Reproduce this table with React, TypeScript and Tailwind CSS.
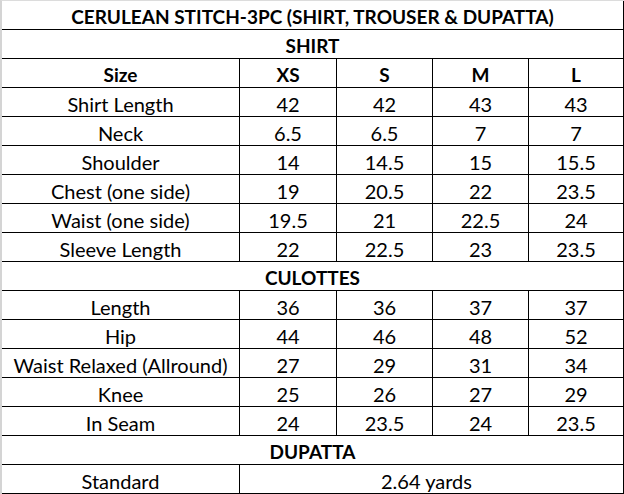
import React from "react";

const cols = "grid-cols-[238px_97px_96px_96px_95px]";

type Row =
  | { kind: "section"; label: string }
  | { kind: "data"; cells: string[]; bold?: boolean }
  | { kind: "span"; label: string; value: string };

const rows: Row[] = [
  { kind: "section", label: "CERULEAN STITCH-3PC (SHIRT, TROUSER & DUPATTA)" },
  { kind: "section", label: "SHIRT" },
  { kind: "data", cells: ["Size", "XS", "S", "M", "L"], bold: true },
  { kind: "data", cells: ["Shirt Length", "42", "42", "43", "43"] },
  { kind: "data", cells: ["Neck", "6.5", "6.5", "7", "7"] },
  { kind: "data", cells: ["Shoulder", "14", "14.5", "15", "15.5"] },
  { kind: "data", cells: ["Chest (one side)", "19", "20.5", "22", "23.5"] },
  { kind: "data", cells: ["Waist (one side)", "19.5", "21", "22.5", "24"] },
  { kind: "data", cells: ["Sleeve Length", "22", "22.5", "23", "23.5"] },
  { kind: "section", label: "CULOTTES" },
  { kind: "data", cells: ["Length", "36", "36", "37", "37"] },
  { kind: "data", cells: ["Hip", "44", "46", "48", "52"] },
  { kind: "data", cells: ["Waist Relaxed (Allround)", "27", "29", "31", "34"] },
  { kind: "data", cells: ["Knee", "25", "26", "27", "29"] },
  { kind: "data", cells: ["In Seam", "24", "23.5", "24", "23.5"] },
  { kind: "section", label: "DUPATTA" },
  { kind: "span", label: "Standard", value: "2.64 yards" },
];

const cell =
  "h-[29px] border-b border-black flex items-center justify-center pt-[3px] leading-none whitespace-nowrap";

export default function App() {
  return (
    <div
      className="w-[624px] h-[494px] bg-white border-l-2 border-t border-l-[#d4d4d4] border-t-[#dcdcdc] text-black text-[20px]"
      style={{ fontFamily: "Lato, 'Liberation Sans', sans-serif" }}
    >
      <div className={`grid ${cols}`}>
        {rows.map((r, i) => {
          if (r.kind === "section") {
            return (
              <div key={i} className={`${cell} col-span-5 font-bold text-[19px] border-r`}>
                {r.label}
              </div>
            );
          }
          if (r.kind === "span") {
            return (
              <React.Fragment key={i}>
                <div className={`${cell} border-r`}>{r.label}</div>
                <div className={`${cell} col-span-4 border-r pr-[10px]`}>{r.value}</div>
              </React.Fragment>
            );
          }
          return (
            <React.Fragment key={i}>
              {r.cells.map((c, j) => (
                <div key={j} className={`${cell} border-r ${r.bold ? "font-bold text-[19px]" : ""}`}>
                  {c}
                </div>
              ))}
            </React.Fragment>
          );
        })}
      </div>
    </div>
  );
}
